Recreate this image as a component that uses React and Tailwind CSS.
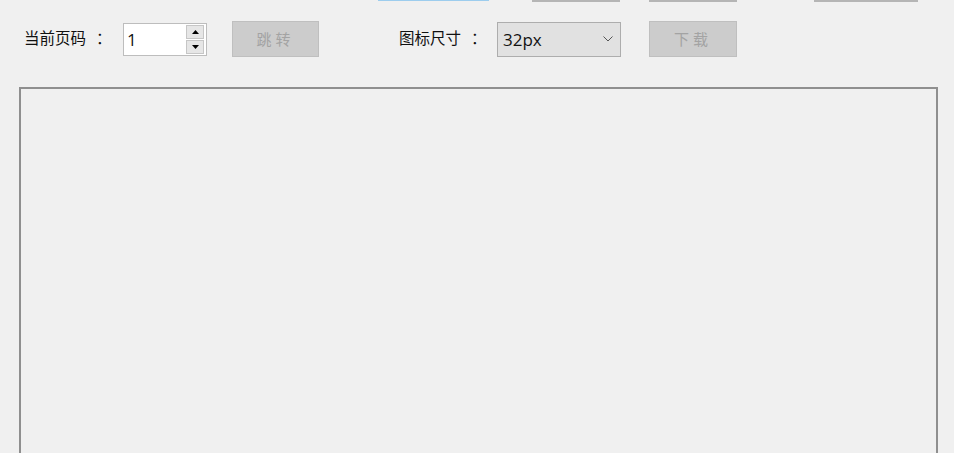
import React from "react";

const font = { fontFamily: '"Noto Sans", "Noto Sans CJK SC", sans-serif' };
const latin = { fontFamily: '"Open Sans", "Noto Sans", sans-serif' };

export default function App() {
  return (
    <div
      className="w-[954px] h-[453px] overflow-hidden bg-[#f0f0f0] flex flex-col text-[#000]"
      style={font}
    >
      {/* cut-off top row */}
      <div className="h-[2px] flex items-start">
        <div className="ml-[378px] w-[111px] h-[1px] bg-[#9dcdee]" />
        <div className="ml-[43px] w-[88px] h-[2px] bg-[#b5b5b5]" />
        <div className="ml-[29px] w-[88px] h-[2px] bg-[#b5b5b5]" />
        <div className="ml-[77px] w-[104px] h-[2px] bg-[#b5b5b5]" />
      </div>

      {/* controls row */}
      <div className="mt-[19px] h-[36px] flex items-center">
        <div className="ml-[24px] w-[99px] flex items-center text-[15.5px] leading-none text-[#111]">
          <span>当前页码</span>
          <span className="ml-[10px]">：</span>
        </div>
        <div className="w-[84px] h-[33px] border border-[#bdbdbd] bg-white flex items-center">
          <span className="ml-[3px] flex-1 text-[17px] leading-none text-[#111]" style={latin}>1</span>
          <div className="mr-[2px] w-[18px] h-[29px] flex flex-col gap-[1px]">
            <div className="flex-1 bg-[#e6e6e6] border border-[#c6c6c6] flex items-center justify-center">
              <svg width="7" height="4" viewBox="0 0 7 4"><path d="M3.5 0 L7 4 L0 4 Z" fill="#000" /></svg>
            </div>
            <div className="flex-1 bg-[#e6e6e6] border border-[#c6c6c6] flex items-center justify-center">
              <svg width="7" height="4" viewBox="0 0 7 4"><path d="M0 0 L7 0 L3.5 4 Z" fill="#000" /></svg>
            </div>
          </div>
        </div>
        <div className="ml-[25px] w-[87px] h-[36px] bg-[#cccccc] border border-[#bfbfbf] flex items-center justify-center text-[15px] leading-none text-[#a3a3a3] tracking-[4px]">
          跳转
        </div>

        <div className="ml-[80px] w-[98px] flex items-center text-[15.5px] leading-none text-[#111]">
          <span>图标尺寸</span>
          <span className="ml-[10px]">：</span>
        </div>
        <div className="w-[124px] h-[35px] bg-[#e1e1e1] border border-[#adadad] flex items-center">
          <span className="ml-[5px] flex-1 text-[17px] leading-none text-[#111]" style={latin}>32px</span>
          <svg className="mr-[7px]" width="10" height="6" viewBox="0 0 10 6">
            <path d="M0.5 0.5 L5 5 L9.5 0.5" fill="none" stroke="#555" strokeWidth="1" />
          </svg>
        </div>
        <div className="ml-[28px] w-[88px] h-[36px] bg-[#cccccc] border border-[#bfbfbf] flex items-center justify-center text-[15px] leading-none text-[#a3a3a3] tracking-[4px]">
          下载
        </div>
      </div>

      {/* panel */}
      <div className="mt-[30px] ml-[19px] w-[919px] h-[400px] shrink-0 border-t-2 border-l-2 border-r-2 border-[#8f8f8f] bg-[#f0f0f0]" />
    </div>
  );
}
